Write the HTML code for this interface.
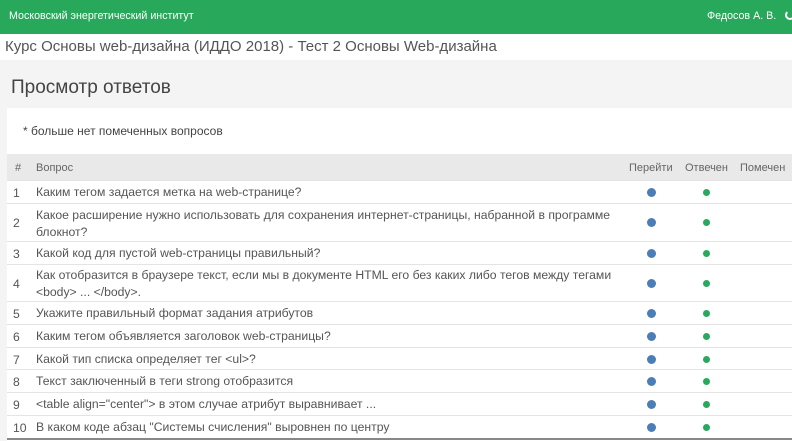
<!DOCTYPE html>
<html><head><meta charset="utf-8"><style>
*{margin:0;padding:0;box-sizing:border-box}
body{width:792px;height:441px;overflow:hidden;background:#f4f4f4;font-family:"Liberation Sans",sans-serif;color:#444;position:relative}
.top{position:absolute;left:0;top:0;width:792px;height:34px;background:#27a85b;color:#fff;font-size:10.7px}
.top .l{position:absolute;left:9px;top:10px}
.top .r{position:absolute;left:707px;top:10px}
.top .ic{position:absolute;left:785px;top:10px;width:10px;height:10px;border:2px solid #fff;border-radius:50%;border-top-color:transparent}
.title{position:absolute;left:0;top:34px;width:792px;height:26px;background:#fff;font-size:15px;color:#555;padding:4px 0 0 5px}
h1{position:absolute;left:11px;top:77px;font-weight:normal;font-size:19px;color:#444}
.panel{position:absolute;left:7px;top:108px;width:785px;height:333px;background:#fff}
.note{position:absolute;left:23px;top:124px;font-size:12px;color:#444}
.row{position:absolute;left:7px;width:785px;border-bottom:1px solid #e4e4e4;font-size:12.2px;color:#555}
.row .n{position:absolute;left:6px}
.row .q{position:absolute;left:29px;width:585px;line-height:17px}
.hd{background:#e9e9e9;height:27px;top:154px;color:#666;font-size:11px}
.hd span{position:absolute;top:8px}
.b{position:absolute;left:640px;width:9px;height:9px;border-radius:50%;background:#4a7eb8}
.g{position:absolute;left:696px;width:7px;height:7px;border-radius:50%;background:#2aa85f}
</style></head><body>
<div class="top"><span class="l">Московский энергетический институт</span><span class="r">Федосов А. В.</span><span class="ic"></span></div>
<div class="title">Курс Основы web-дизайна (ИДДО 2018) - Тест 2 Основы Web-дизайна</div>
<h1>Просмотр ответов</h1>
<div class="panel"></div>
<div class="note">* больше нет помеченных вопросов</div>
<div class="row hd"><span style="left:8px">#</span><span style="left:29px">Вопрос</span><span style="left:622px">Перейти</span><span style="left:678px">Отвечен</span><span style="left:733px">Помечен</span></div>

<div class="row" style="top:181px;height:23px"><span class="n" style="top:5px">1</span><span class="q" style="top:3px">Каким тегом задается метка на web-странице?</span><i class="b" style="top:7px"></i><i class="g" style="top:8px"></i></div>
<div class="row" style="top:204px;height:38px"><span class="n" style="top:12px">2</span><span class="q" style="top:3px">Какое расширение нужно использовать для сохранения интернет-страницы, набранной в программе блокнот?</span><i class="b" style="top:14px"></i><i class="g" style="top:15px"></i></div>
<div class="row" style="top:242px;height:23px"><span class="n" style="top:5px">3</span><span class="q" style="top:3px">Какой код для пустой web-страницы правильный?</span><i class="b" style="top:7px"></i><i class="g" style="top:8px"></i></div>
<div class="row" style="top:265px;height:37px"><span class="n" style="top:12px">4</span><span class="q" style="top:2px">Как отобразится в браузере текст, если мы в документе HTML его без каких либо тегов между тегами<br>&lt;body&gt; ... &lt;/body&gt;.</span><i class="b" style="top:14px"></i><i class="g" style="top:15px"></i></div>
<div class="row" style="top:302px;height:23px"><span class="n" style="top:5px">5</span><span class="q" style="top:3px">Укажите правильный формат задания атрибутов</span><i class="b" style="top:7px"></i><i class="g" style="top:8px"></i></div>
<div class="row" style="top:325px;height:23px"><span class="n" style="top:5px">6</span><span class="q" style="top:3px">Каким тегом объявляется заголовок web-страницы?</span><i class="b" style="top:7px"></i><i class="g" style="top:8px"></i></div>
<div class="row" style="top:348px;height:22px"><span class="n" style="top:5px">7</span><span class="q" style="top:3px">Какой тип списка определяет тег &lt;ul&gt;?</span><i class="b" style="top:7px"></i><i class="g" style="top:8px"></i></div>
<div class="row" style="top:370px;height:23px"><span class="n" style="top:5px">8</span><span class="q" style="top:3px">Текст заключенный в теги strong отобразится</span><i class="b" style="top:7px"></i><i class="g" style="top:8px"></i></div>
<div class="row" style="top:393px;height:23px"><span class="n" style="top:5px">9</span><span class="q" style="top:3px">&lt;table align="center"&gt; в этом случае атрибут выравнивает ...</span><i class="b" style="top:7px"></i><i class="g" style="top:8px"></i></div>
<div class="row" style="top:416px;height:24px;border-bottom:2px solid #888"><span class="n" style="top:5px">10</span><span class="q" style="top:3px">В каком коде абзац "Системы счисления" выровнен по центру</span><i class="b" style="top:7px"></i><i class="g" style="top:8px"></i></div>
</body></html>
